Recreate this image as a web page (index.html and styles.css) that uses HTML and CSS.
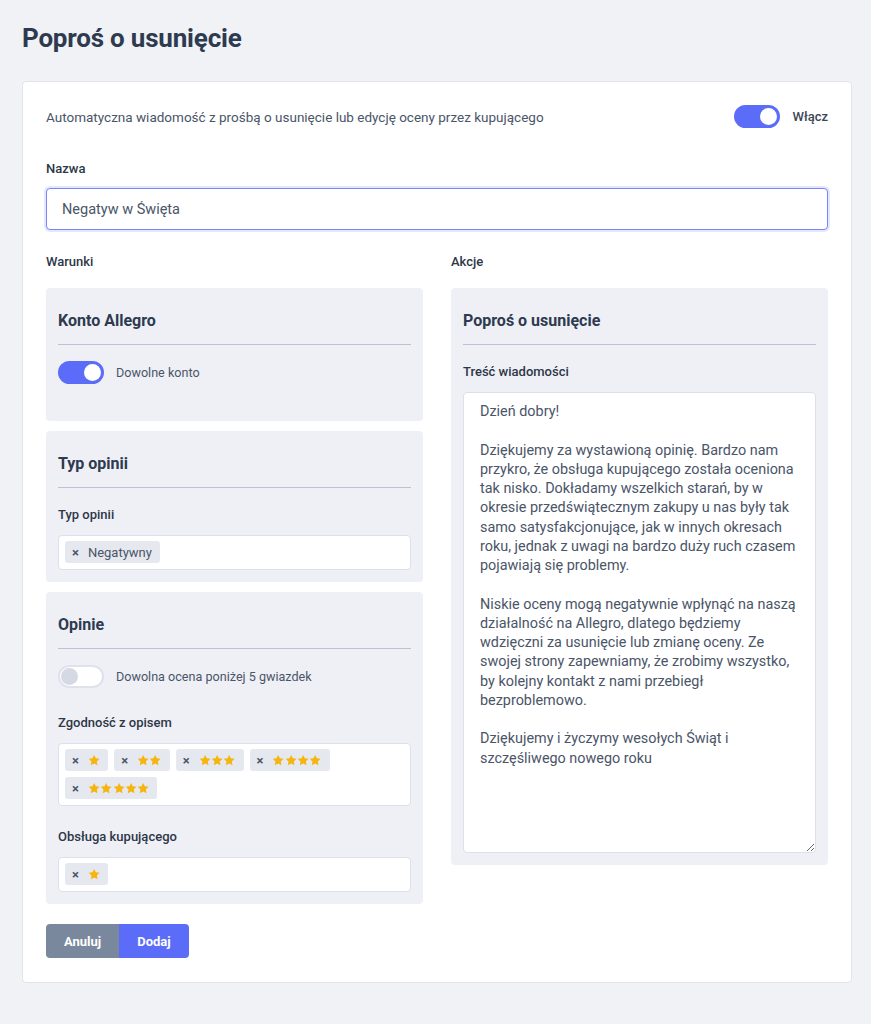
FILE: index.html
```html
<!DOCTYPE html>
<html lang="pl">
<head>
    <meta charset="UTF-8">
    <meta name="viewport" content="width=device-width, initial-scale=1.0">
    <title>Poproś o usunięcie</title>
    <link rel="stylesheet" href="styles.css">
</head>
<body>
    <div class="page">
        <h1>Poproś o usunięcie</h1>

        <div class="card">
            <div class="intro">
                <p>Automatyczna wiadomość z prośbą o usunięcie lub edycję oceny przez kupującego</p>
                <label class="switch-row">
                    <span class="switch on"></span>
                    <span class="switch-label">Włącz</span>
                </label>
            </div>

            <div class="label name-label">Nazwa</div>
            <input type="text" class="text-input" value="Negatyw w Święta">

            <div class="columns">
                <div class="column">
                    <div class="label">Warunki</div>

                    <div class="box">
                        <h2>Konto Allegro</h2>
                        <label class="switch-row spaced">
                            <span class="switch on"></span>
                            <span class="switch-label">Dowolne konto</span>
                        </label>
                    </div>

                    <div class="box">
                        <h2>Typ opinii</h2>
                        <div class="field first">
                            <div class="label">Typ opinii</div>
                            <div class="select">
                                <span class="chip"><span class="x">×</span>Negatywny</span>
                            </div>
                        </div>
                    </div>

                    <div class="box">
                        <h2>Opinie</h2>
                        <label class="switch-row">
                            <span class="switch"></span>
                            <span class="switch-label">Dowolna ocena poniżej 5 gwiazdek</span>
                        </label>
                        <div class="field">
                            <div class="label">Zgodność z opisem</div>
                            <div class="select" id="zgodnosc"></div>
                        </div>
                        <div class="field">
                            <div class="label">Obsługa kupującego</div>
                            <div class="select" id="obsluga"></div>
                        </div>
                    </div>
                </div>

                <div class="column">
                    <div class="label">Akcje</div>
                    <div class="box">
                        <h2>Poproś o usunięcie</h2>
                        <div class="field first">
                            <div class="label">Treść wiadomości</div>
                            <textarea class="message">Dzień dobry!

Dziękujemy za wystawioną opinię. Bardzo nam przykro, że obsługa kupującego została oceniona tak nisko. Dokładamy wszelkich starań, by w okresie przedświątecznym zakupy u nas były tak samo satysfakcjonujące, jak w innych okresach roku, jednak z uwagi na bardzo duży ruch czasem pojawiają się problemy.

Niskie oceny mogą negatywnie wpłynąć na naszą działalność na Allegro, dlatego będziemy wdzięczni za usunięcie lub zmianę oceny. Ze swojej strony zapewniamy, że zrobimy wszystko, by kolejny kontakt z nami przebiegł bezproblemowo.

Dziękujemy i życzymy wesołych Świąt i szczęśliwego nowego roku</textarea>
                        </div>
                    </div>
                </div>
            </div>

            <div class="buttons">
                <button class="btn cancel">Anuluj</button>
                <button class="btn add">Dodaj</button>
            </div>
        </div>
    </div>

    <script>
        // Gwiazdki w wybranych ocenach
        const star = '<svg class="star" viewBox="0 0 24 24"><path d="M12 1.2l3.2 6.6 7.3 1-5.3 5.1 1.3 7.2L12 17.7l-6.5 3.4 1.3-7.2-5.3-5.1 7.3-1z"/></svg>';

        function chips(id, counts) {
            let html = "";
            counts.forEach(n => {
                html += `<span class="chip"><span class="x">×</span>${star.repeat(n)}</span>`;
            });
            document.getElementById(id).innerHTML = html;
        }

        chips("zgodnosc", [1, 2, 3, 4, 5]);
        chips("obsluga", [1]);
    </script>
</body>
</html>
```

FILE: styles.css
```css
body {
    margin: 0;
    background: #f1f2f6;
    font-family: Roboto, 'Liberation Sans', sans-serif;
    color: #4a5568;
}

.page {
    padding: 22px 19px 42px 22px;
}

h1 {
    margin: 0 0 27px;
    font-size: 26px;
    line-height: 32px;
    font-weight: 700;
    color: #2d3a4f;
    letter-spacing: -0.2px;
}

.card {
    background: #fff;
    border: 1px solid #e1e4ea;
    border-radius: 4px;
    padding: 23px 23px 24px 23px;
}

.intro {
    display: flex;
    align-items: center;
    justify-content: space-between;
}

.intro p {
    margin: 0;
    font-size: 13.5px;
}

.label {
    font-size: 13px;
    line-height: 18px;
    font-weight: 500;
    color: #2d3748;
}

.name-label {
    margin-top: 32px;
}

.text-input {
    display: block;
    width: 100%;
    box-sizing: border-box;
    height: 42px;
    margin-top: 10px;
    padding: 0 15px;
    font-family: inherit;
    font-size: 14.5px;
    color: #4a5568;
    border: 1px solid #7c85f5;
    border-radius: 4px;
    box-shadow: 0 0 0 2px #e4e7fd;
    outline: none;
}

.columns {
    display: grid;
    grid-template-columns: 1fr 1fr;
    gap: 28px;
    margin-top: 23px;
}

.column > .label {
    margin-bottom: 17px;
}

.box {
    background: #eff0f5;
    border-radius: 4px;
    padding: 22px 12px 12px;
    margin-bottom: 10px;
}

.box h2 {
    margin: 0 0 12px;
    padding-bottom: 12px;
    border-bottom: 1px solid #bac3d3;
    font-size: 16px;
    line-height: 22px;
    font-weight: 700;
    color: #2d3a4f;
}

.switch-row {
    display: flex;
    align-items: center;
    gap: 12px;
    font-size: 12.6px;
}

.box .switch-row {
    margin-top: 16px;
}

.box .switch-row.spaced {
    margin-bottom: 25px;
}

.switch {
    position: relative;
    width: 46px;
    height: 23px;
    box-sizing: border-box;
    border-radius: 12px;
    background: #fff;
    border: 2px solid #dfe2ec;
}

.switch::after {
    content: "";
    position: absolute;
    top: 1px;
    left: 1px;
    width: 17px;
    height: 17px;
    border-radius: 50%;
    background: #d5d9e4;
}

.switch.on {
    background: #5b6cf9;
    border-color: #5b6cf9;
}

.switch.on::after {
    left: auto;
    right: 1px;
    background: #fff;
}

.switch-label {
    color: #4a5568;
}

.intro .switch-label {
    font-size: 13px;
    font-weight: 500;
    color: #3c4657;
}

.field {
    margin-top: 26px;
}

.field + .field {
    margin-top: 22px;
}

.field.first {
    margin-top: 18px;
}

.field .label {
    margin-bottom: 11px;
}

.select {
    display: flex;
    flex-wrap: wrap;
    gap: 6px;
    background: #fff;
    border: 1px solid #dde0ea;
    border-radius: 4px;
    padding: 5px 6px 6px;
}

.chip {
    display: inline-flex;
    align-items: center;
    height: 22px;
    padding: 0 8px 0 7px;
    background: #e5e8ee;
    border-radius: 3px;
    font-size: 13px;
    color: #4a5568;
}

.chip .x {
    font-size: 13px;
    font-weight: 700;
    color: #4a5568;
    margin-right: 9px;
}

.star {
    width: 12.3px;
    height: 13px;
    fill: #f6b40e;
}

.message {
    display: block;
    width: 100%;
    height: 461px;
    box-sizing: border-box;
    padding: 9px 16px;
    font-family: inherit;
    font-size: 14.4px;
    line-height: 19.25px;
    color: #4a5568;
    border: 1px solid #dde0ea;
    border-radius: 4px;
    resize: vertical;
}

.buttons {
    display: flex;
    margin-top: 10px;
}

.btn {
    height: 34px;
    border: none;
    padding: 0 18px;
    font-family: inherit;
    font-size: 13px;
    font-weight: 700;
    color: #fff;
    cursor: pointer;
}

.cancel {
    background: #7a889e;
    border-radius: 4px 0 0 4px;
}

.add {
    background: #5b6cf9;
    border-radius: 0 4px 4px 0;
}
```
